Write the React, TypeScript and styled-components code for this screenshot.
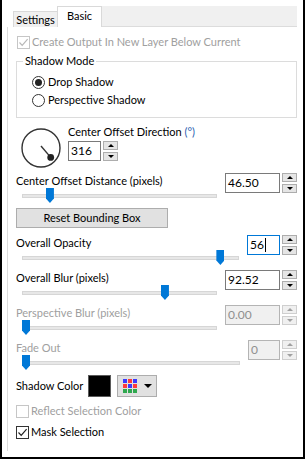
import React from "react";
import styled, { createGlobalStyle, css } from "styled-components";

const GlobalStyle = createGlobalStyle`
  html, body {
    margin: 0;
    padding: 0;
    background: #ffffff;
  }
  * {
    box-sizing: border-box;
  }
`;

const FONT = `"Lato", "Liberation Sans", Arial, sans-serif`;
const DISABLED = "#a0a0a0";

const Frame = styled.div`
  width: 305px;
  height: 459px;
  padding-top: 6px;
  border-left: 2px solid #000;
  border-right: 2px solid #000;
  border-bottom: 2px solid #000;
  background: #fff;
  font-family: ${FONT};
  font-size: 11px;
  color: #000;
  overflow: hidden;
`;

const TabBar = styled.div`
  display: flex;
  align-items: flex-end;
  margin-left: 5px;
  width: 290px;
  height: 21px;
  padding-left: 6px;
`;

const Tab = styled.div<{ $active?: boolean; $width: number }>`
  display: flex;
  align-items: center;
  justify-content: center;
  width: ${({ $width }) => $width}px;
  line-height: 14px;
  ${({ $active }) =>
    $active
      ? css`
          height: 21px;
          padding-bottom: 3px;
          background: #fff;
          border: 1px solid #d9d9d9;
          border-bottom: none;
        `
      : css`
          height: 16px;
          background: #f0f0f0;
          border: 1px solid #d9d9d9;
          border-right: none;
          border-bottom: none;
        `}
`;

const TabFill = styled.div`
  flex: 1;
  height: 21px;
  background: #f0f0f0;
  border-bottom: 1px solid #dcdcdc;
`;

const Page = styled.div`
  display: flex;
  flex-direction: column;
  margin-left: 5px;
  width: 290px;
  height: 424px;
  padding: 8px 0 0 8px;
  border-left: 1px solid #dcdcdc;
`;

const CheckRow = styled.div<{ $top?: number; $indent?: number }>`
  display: flex;
  align-items: center;
  gap: 2px;
  height: 14px;
  margin-top: ${({ $top }) => $top ?? 0}px;
  margin-left: ${({ $indent }) => $indent ?? 0}px;
`;

const Box = styled.span<{ $disabled?: boolean }>`
  display: flex;
  align-items: center;
  justify-content: center;
  width: 13px;
  height: 13px;
  border: 1px solid ${({ $disabled }) => ($disabled ? "#c6c6c6" : "#333")};
  background: #fff;

  svg {
    display: block;
  }
`;

const Text = styled.span<{ $disabled?: boolean }>`
  line-height: 14px;
  white-space: nowrap;
  color: ${({ $disabled }) => ($disabled ? DISABLED : "#000")};
`;

const Unit = styled.span`
  color: #2a5db0;
`;

const Group = styled.div`
  position: relative;
  display: flex;
  flex-direction: column;
  margin-top: 12px;
  height: 57px;
  padding: 11px 0 0 15px;
  border: 1px solid #dcdcdc;
`;

const Legend = styled.span`
  position: absolute;
  top: -8px;
  left: 6px;
  padding: 0 2px;
  background: #fff;
  line-height: 14px;
`;

const RadioRow = styled.div`
  display: flex;
  align-items: center;
  gap: 3px;
  height: 18px;
`;

const RadioDot = styled.span<{ $checked?: boolean }>`
  display: flex;
  align-items: center;
  justify-content: center;
  width: 13px;
  height: 13px;
  border: 1px solid #333;
  border-radius: 50%;

  &::after {
    content: "";
    display: ${({ $checked }) => ($checked ? "block" : "none")};
    width: 7px;
    height: 7px;
    border-radius: 50%;
    background: #222;
  }
`;

const DialRow = styled.div`
  display: flex;
  margin-top: 7px;
  height: 44px;
`;

const DialSvg = styled.svg`
  display: block;
  margin: 2px 0 0 4px;
`;

const DialSide = styled.div`
  display: flex;
  flex-direction: column;
  gap: 2px;
  margin-left: 6px;
`;

const Block = styled.div<{ $top: number }>`
  display: grid;
  grid-template-columns: 1fr auto;
  column-gap: 8px;
  margin-top: ${({ $top }) => $top}px;
`;

const BlockLabel = styled(Text)`
  margin-top: 1px;
`;

const SpinWrap = styled.div`
  display: flex;
  gap: 2px;
  height: 20px;
`;

const SpinInput = styled.div<{ $width: number; $focused?: boolean; $disabled?: boolean }>`
  display: flex;
  align-items: center;
  width: ${({ $width }) => $width}px;
  height: 20px;
  padding-left: 2px;
  line-height: 14px;
  font-size: 12px;
  border: 1px solid #7a7a7a;
  background: #fff;
  ${({ $focused }) =>
    $focused &&
    css`
      border-color: #0078d7;
    `}
  ${({ $disabled }) =>
    $disabled &&
    css`
      border-color: #b4b4b4;
      background: #f0f0f0;
      color: #8f8f8f;
    `}
`;

const Caret = styled.span`
  display: inline-block;
  width: 1px;
  height: 14px;
  margin-left: 1px;
  background: #000;
`;

const SpinButtons = styled.div`
  display: flex;
  flex-direction: column;
  gap: 2px;
  width: 15px;
`;

const SpinBtn = styled.div<{ $down?: boolean; $disabled?: boolean }>`
  display: flex;
  align-items: center;
  justify-content: center;
  height: 9px;
  border: 1px solid ${({ $disabled }) => ($disabled ? "#cfcfcf" : "#adadad")};
  background: ${({ $disabled }) => ($disabled ? "#f0f0f0" : "#e5e5e5")};

  &::after {
    content: "";
    width: 0;
    height: 0;
    border-left: 3px solid transparent;
    border-right: 3px solid transparent;
    ${({ $down, $disabled }) =>
      $down
        ? css`
            border-top: 3px solid ${$disabled ? DISABLED : "#000"};
          `
        : css`
            border-bottom: 3px solid ${$disabled ? DISABLED : "#000"};
          `}
  }
`;

const Slider = styled.div`
  position: relative;
  grid-column: 1;
  height: 15px;
  margin: -5px 0 0 6px;
  padding-top: 6px;
`;

const Track = styled.div`
  height: 4px;
  background: #e7e7e7;
  border: 1px solid #d6d6d6;
`;

const Thumb = styled.div`
  position: absolute;
  top: 0;
  width: 8px;
  height: 15px;
  background: #0078d7;
  clip-path: polygon(0 0, 100% 0, 100% 70%, 50% 100%, 0 70%);
`;

const Button = styled.div`
  display: flex;
  align-items: center;
  justify-content: center;
  margin-top: 5px;
  width: 152px;
  height: 20px;
  background: #e1e1e1;
  border: 1px solid #adadad;
  line-height: 14px;
`;

const ColorRow = styled.div`
  display: flex;
  align-items: center;
  margin-top: 5px;
  height: 22px;
`;

const ColorLabel = styled(Text)`
  flex: 0 0 72px;
`;

const Swatch = styled.div`
  width: 23px;
  height: 22px;
  background: #000;
  border: 1px solid #5a5a5a;
`;

const PaletteButton = styled.div`
  display: flex;
  align-items: center;
  gap: 7px;
  margin-left: 6px;
  width: 40px;
  height: 22px;
  padding-left: 5px;
  background: #e1e1e1;
  border: 1px solid #adadad;
`;

const PaletteGrid = styled.div`
  display: grid;
  grid-template-columns: repeat(3, 4px);
  grid-auto-rows: 4px;
  gap: 1px;
`;

const Cell = styled.span<{ $color: string }>`
  background: ${({ $color }) => $color};
`;

const DropArrow = styled.span`
  width: 0;
  height: 0;
  border-left: 4px solid transparent;
  border-right: 4px solid transparent;
  border-top: 4px solid #000;
`;

type CheckProps = { checked?: boolean; disabled?: boolean };

const Check = ({ checked, disabled }: CheckProps) => (
  <Box $disabled={disabled}>
    {checked && (
      <svg width="11" height="11" viewBox="0 0 11 11">
        <path
          d="M1.5 5.5 L4.2 8.3 L9.6 2.2"
          fill="none"
          stroke={disabled ? "#b8b8b8" : "#222"}
          strokeWidth="1.2"
        />
      </svg>
    )}
  </Box>
);

type SpinProps = {
  value: string;
  width: number;
  focused?: boolean;
  disabled?: boolean;
};

const Spin = ({ value, width, focused, disabled }: SpinProps) => (
  <SpinWrap>
    <SpinInput $width={width} $focused={focused} $disabled={disabled}>
      {value}
      {focused && <Caret />}
    </SpinInput>
    <SpinButtons>
      <SpinBtn $disabled={disabled} />
      <SpinBtn $down $disabled={disabled} />
    </SpinButtons>
  </SpinWrap>
);

type BlockProps = {
  label: string;
  value: string;
  boxWidth: number;
  pos: number;
  top: number;
  focused?: boolean;
  disabled?: boolean;
};

const SliderBlock = ({ label, value, boxWidth, pos, top, focused, disabled }: BlockProps) => (
  <Block $top={top}>
    <BlockLabel $disabled={disabled}>{label}</BlockLabel>
    <Spin value={value} width={boxWidth} focused={focused} disabled={disabled} />
    <Slider>
      <Track />
      <Thumb style={{ left: `calc((100% - 8px) * ${pos})` }} />
    </Slider>
  </Block>
);

const Dial = ({ angle }: { angle: number }) => {
  // angle measured counter-clockwise from east, as the dialog does
  const rad = (angle * Math.PI) / 180;
  const r = 19;
  const x = 21 + Math.cos(rad) * (r - 5.5);
  const y = 21 - Math.sin(rad) * (r - 5.5);
  return (
    <DialSvg width="42" height="42" viewBox="0 0 42 42">
      <circle cx="21" cy="21" r={r} fill="#fff" stroke="#333" strokeWidth="1.4" />
      <line x1="21" y1="19" x2={x} y2={y} stroke="#333" strokeWidth="1.4" />
      <circle cx={x} cy={y} r="3.4" fill="#222" />
    </DialSvg>
  );
};

const palette = [
  "#3b3bff", "#ff3b3b", "#3b3bff",
  "#ff3b3b", "#3b3bff", "#ff3b3b",
  "#2fa84f", "#2fa84f", "#2fa84f",
];

export default function App() {
  return (
    <>
      <GlobalStyle />
      <Frame>
        <TabBar>
          <Tab $width={44}>Settings</Tab>
          <Tab $active $width={45}>Basic</Tab>
          <TabFill />
        </TabBar>
        <Page>
          <CheckRow $indent={1}>
            <Check checked disabled />
            <Text $disabled>Create Output In New Layer Below Current</Text>
          </CheckRow>

          <Group>
            <Legend>Shadow Mode</Legend>
            <RadioRow>
              <RadioDot $checked />
              <Text>Drop Shadow</Text>
            </RadioRow>
            <RadioRow>
              <RadioDot />
              <Text>Perspective Shadow</Text>
            </RadioRow>
          </Group>

          <DialRow>
            <Dial angle={316} />
            <DialSide>
              <Text>
                Center Offset Direction <Unit>(°)</Unit>
              </Text>
              <Spin value="316" width={33} />
            </DialSide>
          </DialRow>

          <SliderBlock label="Center Offset Distance (pixels)" value="46.50" boxWidth={55} pos={0.128} top={4} />

          <Button>Reset Bounding Box</Button>

          <SliderBlock label="Overall Opacity" value="56" boxWidth={33} pos={0.93} top={7} focused />
          <SliderBlock label="Overall Blur (pixels)" value="92.52" boxWidth={55} pos={0.743} top={5} />
          <SliderBlock label="Perspective Blur (pixels)" value="0.00" boxWidth={55} pos={0} top={5} disabled />
          <SliderBlock label="Fade Out" value="0" boxWidth={32} pos={0} top={5} disabled />

          <ColorRow>
            <ColorLabel>Shadow Color</ColorLabel>
            <Swatch />
            <PaletteButton>
              <PaletteGrid>
                {palette.map((c, i) => (
                  <Cell key={i} $color={c} />
                ))}
              </PaletteGrid>
              <DropArrow />
            </PaletteButton>
          </ColorRow>

          <CheckRow $top={7}>
            <Check disabled />
            <Text $disabled>Reflect Selection Color</Text>
          </CheckRow>
          <CheckRow $top={7}>
            <Check checked />
            <Text>Mask Selection</Text>
          </CheckRow>
        </Page>
      </Frame>
    </>
  );
}
